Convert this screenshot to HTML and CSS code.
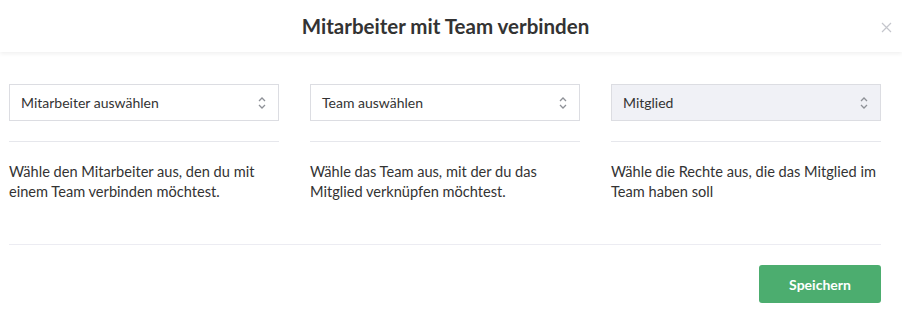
FILE: index.html
```html
<!DOCTYPE html>
<html lang="de">
<head>
    <meta charset="UTF-8">
    <title>Mitarbeiter mit Team verbinden</title>
    <link rel="stylesheet" href="styles.css">
</head>
<body>
    <div class="modal">
        <header class="modal-header">
            <h1 class="modal-title">Mitarbeiter mit Team verbinden</h1>
            <button class="close" aria-label="Schließen">
                <svg width="11" height="11" viewBox="0 0 11 11"><path d="M1 1L10 10M10 1L1 10" stroke="#c4c6cc" stroke-width="1.2" fill="none"/></svg>
            </button>
        </header>
        <div class="modal-body">
            <div class="columns">
                <div class="column">
                    <div class="select">
                        <span>Mitarbeiter auswählen</span>
                        <svg class="chevrons" width="10" height="14" viewBox="0 0 10 14"><path d="M2 5L5 2L8 5M2 9L5 12L8 9" stroke="#8e9197" stroke-width="1.3" fill="none"/></svg>
                    </div>
                    <p class="hint">Wähle den Mitarbeiter aus, den du mit einem Team verbinden möchtest.</p>
                </div>
                <div class="column">
                    <div class="select">
                        <span>Team auswählen</span>
                        <svg class="chevrons" width="10" height="14" viewBox="0 0 10 14"><path d="M2 5L5 2L8 5M2 9L5 12L8 9" stroke="#8e9197" stroke-width="1.3" fill="none"/></svg>
                    </div>
                    <p class="hint">Wähle das Team aus, mit der du das Mitglied verknüpfen möchtest.</p>
                </div>
                <div class="column">
                    <div class="select filled">
                        <span>Mitglied</span>
                        <svg class="chevrons" width="10" height="14" viewBox="0 0 10 14"><path d="M2 5L5 2L8 5M2 9L5 12L8 9" stroke="#8e9197" stroke-width="1.3" fill="none"/></svg>
                    </div>
                    <p class="hint">Wähle die Rechte aus, die das Mitglied im Team haben soll</p>
                </div>
            </div>
            <div class="footer">
                <button class="save">Speichern</button>
            </div>
        </div>
    </div>
</body>
</html>
```

FILE: styles.css
```css
body, html {
    margin: 0;
    padding: 0;
    background: #fff;
    font-family: Lato, "Noto Sans", sans-serif;
    color: #333;
}

.modal-header {
    height: 52px;
    display: flex;
    align-items: center;
    justify-content: center;
    padding-right: 11px;
    position: relative;
    box-shadow: 0 2px 4px rgba(0, 0, 0, 0.06);
}

.modal-title {
    margin: 0;
    font-size: 20.5px;
    font-weight: bold;
    color: #333;
}

.close {
    position: absolute;
    right: 10px;
    top: 22px;
    border: 0;
    background: none;
    padding: 0;
    width: 11px;
    height: 11px;
    display: flex;
}

.modal-body {
    padding: 32px 21px 0 9px;
}

.columns {
    display: grid;
    grid-template-columns: repeat(3, 1fr);
    column-gap: 31px;
}

.select {
    height: 37px;
    box-sizing: border-box;
    border: 1px solid #dcdde2;
    display: flex;
    align-items: center;
    justify-content: space-between;
    padding: 0 11px 0 11px;
    font-size: 14px;
    color: #333;
}

.select.filled {
    background: #f0f1f6;
}

.hint {
    margin: 0;
    border-top: 1px solid #e6e7ec;
    margin-top: 20px;
    padding-top: 20px;
    height: 103px;
    box-sizing: border-box;
    font-size: 14.6px;
    line-height: 20px;
}

.footer {
    border-top: 1px solid #ececf2;
    display: flex;
    justify-content: flex-end;
    padding-top: 20px;
}

.save {
    width: 122px;
    height: 38px;
    border: 0;
    border-radius: 3px;
    background: #4cad6f;
    color: #fff;
    font-family: Lato, "Noto Sans", sans-serif;
    font-weight: bold;
    font-size: 14px;
}
```
